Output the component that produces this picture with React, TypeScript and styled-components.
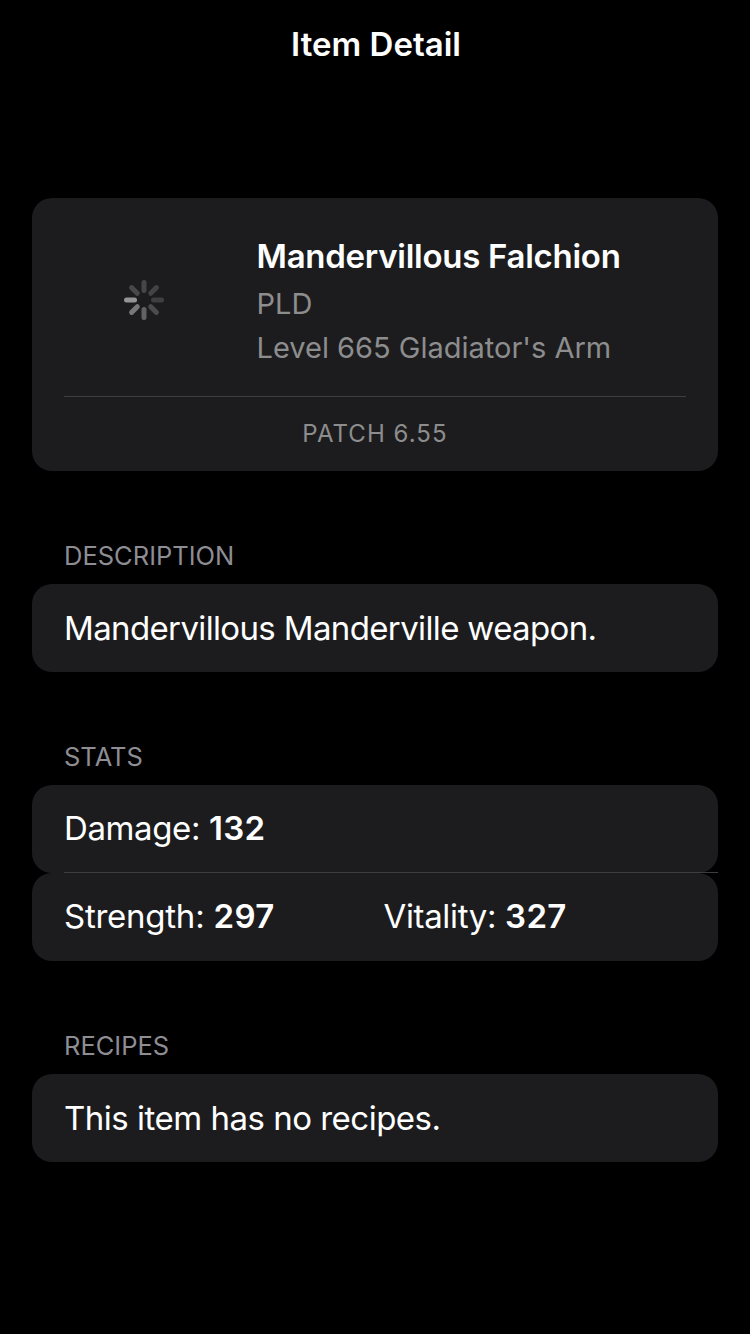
import React from "react";
import styled, { createGlobalStyle } from "styled-components";

const GlobalStyle = createGlobalStyle`
  * { box-sizing: border-box; }
  body {
    margin: 0;
    background: #000;
    color: #fff;
    font-family: Inter, "Liberation Sans", sans-serif;
    font-kerning: normal;
  }
`;

const Screen = styled.main`
  display: flex;
  flex-direction: column;
  width: 750px;
  height: 1334px;
  padding: 0 32px;
  background: #000;
  overflow: hidden;
`;

const NavBar = styled.header`
  display: flex;
  align-items: center;
  justify-content: center;
  height: 88px;
  margin-bottom: 110px;
  padding-left: 2px;
`;

const Text = styled.span<{ $size?: number; $weight?: number; $spacing?: number; $color?: string; $line?: number }>`
  display: block;
  font-size: ${(p) => p.$size ?? 33}px;
  font-weight: ${(p) => p.$weight ?? 400};
  letter-spacing: ${(p) => p.$spacing ?? 0}px;
  color: ${(p) => p.$color ?? "#fff"};
  line-height: ${(p) => p.$line ?? 44}px;
  white-space: nowrap;
`;

const Card = styled.section`
  border-radius: 20px;
  background: #1c1c1e;
`;

const SummaryCard = styled(Card)`
  height: 273px;
  padding: 0 32px;
`;

const Summary = styled.div`
  display: flex;
  height: 199px;
  border-bottom: 1px solid #3d3d41;
`;

const IconSlot = styled.div`
  display: flex;
  justify-content: center;
  width: 160px;
  margin-right: 32.5px;
  padding-top: 80px;
`;

const SummaryText = styled.div`
  display: flex;
  flex-direction: column;
  padding-top: 36px;
`;

const PatchRow = styled.div`
  display: flex;
  align-items: center;
  justify-content: center;
  height: 74px;
`;

const SectionTitle = styled.h2`
  margin: 69px 0 12px;
  padding-left: 32px;
  font-weight: 400;
`;

const Row = styled(Card)<{ $stat?: boolean }>`
  display: grid;
  grid-template-columns: 319.5px 1fr;
  align-items: center;
  height: 88px;
  padding-left: 32px;
  padding-bottom: ${(p) => (p.$stat ? 2 : 0)}px;
`;

const Separator = styled.div`
  height: 1px;
  margin: -1px 0 0 32px;
  background: #3d3d41;
`;

const Value = styled.b`
  font-weight: 600;
  letter-spacing: 0.4px;
`;

const spokes = ["#464649", "#434346", "#3f3f42", "#4b4b4e", "#626266", "#77777b", "#939398", "#48484b"];

function Spinner() {
  return (
    <svg width="44" height="44" viewBox="-22 -22 44 44">
      {spokes.map((color, i) => (
        <line
          key={i}
          y1={-9.5}
          y2={-17.5}
          stroke={color}
          strokeWidth={5}
          strokeLinecap="round"
          transform={`rotate(${i * 45})`}
        />
      ))}
    </svg>
  );
}

function Title({ children }: { children: string }) {
  return (
    <SectionTitle>
      <Text $size={25.5} $color="#8d8d93" $line={32}>
        {children}
      </Text>
    </SectionTitle>
  );
}

function Stat({ label, value, spacing }: { label: string; value: number; spacing: number }) {
  return (
    <Text $spacing={spacing}>
      {label}: <Value>{value}</Value>
    </Text>
  );
}

export default function App() {
  return (
    <>
      <GlobalStyle />
      <Screen>
        <NavBar>
          <Text $weight={600}>Item Detail</Text>
        </NavBar>
        <SummaryCard>
          <Summary>
            <IconSlot>
              <Spinner />
            </IconSlot>
            <SummaryText>
              <Text $weight={600} $spacing={-0.27}>Mandervillous Falchion</Text>
              <Text $size={29} $color="#8d8d8e" $line={52}>PLD</Text>
              <Text $size={29} $color="#8d8d8e" $line={36}>Level 665 Gladiator's Arm</Text>
            </SummaryText>
          </Summary>
          <PatchRow>
            <Text $size={24} $spacing={1.05} $color="#8d8d8e">PATCH 6.55</Text>
          </PatchRow>
        </SummaryCard>

        <Title>DESCRIPTION</Title>
        <Row>
          <Text $spacing={-0.64}>Mandervillous Manderville weapon.</Text>
        </Row>

        <Title>STATS</Title>
        <Row $stat>
          <Stat label="Damage" value={132} spacing={-0.4} />
        </Row>
        <Separator />
        <Row $stat>
          <Stat label="Strength" value={297} spacing={-0.25} />
          <Stat label="Vitality" value={327} spacing={-0.35} />
        </Row>

        <Title>RECIPES</Title>
        <Row>
          <Text $spacing={-0.5}>This item has no recipes.</Text>
        </Row>
      </Screen>
    </>
  );
}
